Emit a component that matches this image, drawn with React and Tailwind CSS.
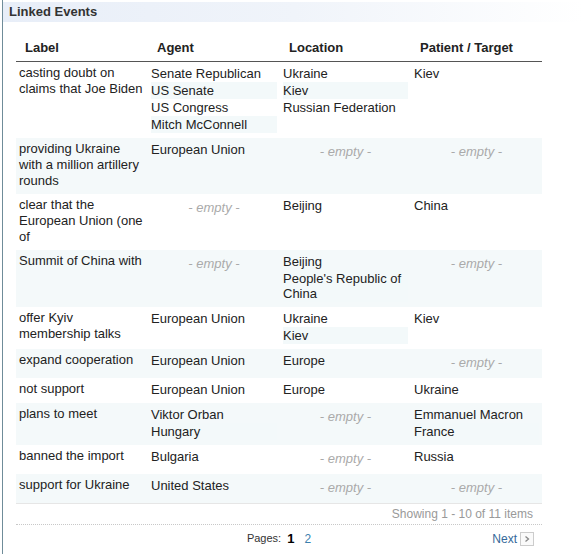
import React from 'react';

const rows = [
  {
    label: 'casting doubt on claims that Joe Biden',
    agent: ['Senate Republican', 'US Senate', 'US Congress', 'Mitch McConnell'],
    location: ['Ukraine', 'Kiev', 'Russian Federation'],
    patient: ['Kiev'],
  },
  {
    label: 'providing Ukraine with a million artillery rounds',
    agent: ['European Union'],
    location: [],
    patient: [],
  },
  {
    label: 'clear that the European Union (one of',
    agent: [],
    location: ['Beijing'],
    patient: ['China'],
  },
  {
    label: 'Summit of China with',
    agent: [],
    location: ['Beijing', "People's Republic of China"],
    patient: [],
  },
  {
    label: 'offer Kyiv membership talks',
    agent: ['European Union'],
    location: ['Ukraine', 'Kiev'],
    patient: ['Kiev'],
  },
  {
    label: 'expand cooperation',
    agent: ['European Union'],
    location: ['Europe'],
    patient: [],
  },
  {
    label: 'not support',
    agent: ['European Union'],
    location: ['Europe'],
    patient: ['Ukraine'],
  },
  {
    label: 'plans to meet',
    agent: ['Viktor Orban', 'Hungary'],
    location: [],
    patient: ['Emmanuel Macron', 'France'],
  },
  {
    label: 'banned the import',
    agent: ['Bulgaria'],
    location: [],
    patient: ['Russia'],
  },
  {
    label: 'support for Ukraine',
    agent: ['United States'],
    location: [],
    patient: [],
  },
];

const Items = ({ items }) => {
  if (!items.length) {
    return (
      <div className="pt-[2px] pb-[2px] leading-[17px] text-center italic text-[#aaa]">- empty -</div>
    );
  }
  return (
    <div>
      {items.map((item, i) => (
        <div
          key={i}
          className={`py-px leading-[15px] ${i % 2 === 1 ? 'bg-[#f3f9fa]' : ''}`}
        >
          {item}
        </div>
      ))}
    </div>
  );
};

const App = () => {
  return (
    <div
      className="w-[584px] h-[554px] bg-white pl-[2px] text-[13px] text-[#222]"
      style={{ fontFamily: '"Liberation Sans", Arial, sans-serif' }}
    >
      <div className="h-full border-l border-[#6f8c99] pt-[2px]">
        {/* title band */}
        <div className="h-[20px] pl-[6px] leading-[20px] font-bold text-[#333] bg-gradient-to-r from-[#e8eef8] via-[#f0f4fa] to-white">
          Linked Events
        </div>

        <div className="ml-[13px] mt-[13px] w-[526px]">
          <table className="w-full table-fixed border-collapse">
            <colgroup>
              <col className="w-[132px]" />
              <col className="w-[132px]" />
              <col className="w-[131px]" />
              <col className="w-[131px]" />
            </colgroup>
            <thead>
              <tr className="h-[26px] border-b border-[#555]">
                <th className="pl-[9px] text-left font-bold align-middle">Label</th>
                <th className="pl-[9px] text-left font-bold align-middle">Agent</th>
                <th className="pl-[9px] text-left font-bold align-middle">Location</th>
                <th className="pl-[9px] text-left font-bold align-middle">Patient / Target</th>
              </tr>
            </thead>
            <tbody>
              {rows.map((row, i) => (
                <tr
                  key={i}
                  className={`${i % 2 === 1 ? 'bg-[#f4f9fa]' : 'bg-white'} ${i === rows.length - 1 ? 'border-b border-[#e6e6e6]' : ''}`}
                >
                  <td className="px-[3px] pt-[3px] pb-[5px] align-top leading-[16px]">{row.label}</td>
                  <td className="px-[3px] pt-[3px] pb-[5px] align-top">
                    <Items items={row.agent} />
                  </td>
                  <td className="px-[3px] pt-[3px] pb-[5px] align-top">
                    <Items items={row.location} />
                  </td>
                  <td className="px-[3px] pt-[3px] pb-[5px] align-top">
                    <Items items={row.patient} />
                  </td>
                </tr>
              ))}
            </tbody>
          </table>

          <div className="h-[21px] pr-[9px] text-right text-[12px] leading-[21px] text-[#999] border-b border-dotted border-[#c8c8c8]">
            Showing 1 - 10 of 11 items
          </div>

          <div className="grid grid-cols-3 items-center h-[28px]">
            <div />
            <div className="flex items-center justify-center gap-[6px] text-[12px]">
              <span className="text-[11px] text-[#333]">Pages:</span>
              <span className="font-bold text-[13px] text-black">1</span>
              <span className="ml-[4px] text-[#3b7fae]">2</span>
            </div>
            <div className="flex items-center justify-end gap-[3px] pr-[8px]">
              <span className="text-[12px] text-[#35699a]">Next</span>
              <span className="flex items-center justify-center w-[14px] h-[14px] border border-[#ccc] bg-[#fafafa]">
                <svg width="8" height="8" viewBox="0 0 8 8">
                  <path d="M2.5 1.5 L5.5 4 L2.5 6.5" fill="none" stroke="#888" strokeWidth="1.3" />
                </svg>
              </span>
            </div>
          </div>
        </div>
      </div>
    </div>
  );
};

export default App;
